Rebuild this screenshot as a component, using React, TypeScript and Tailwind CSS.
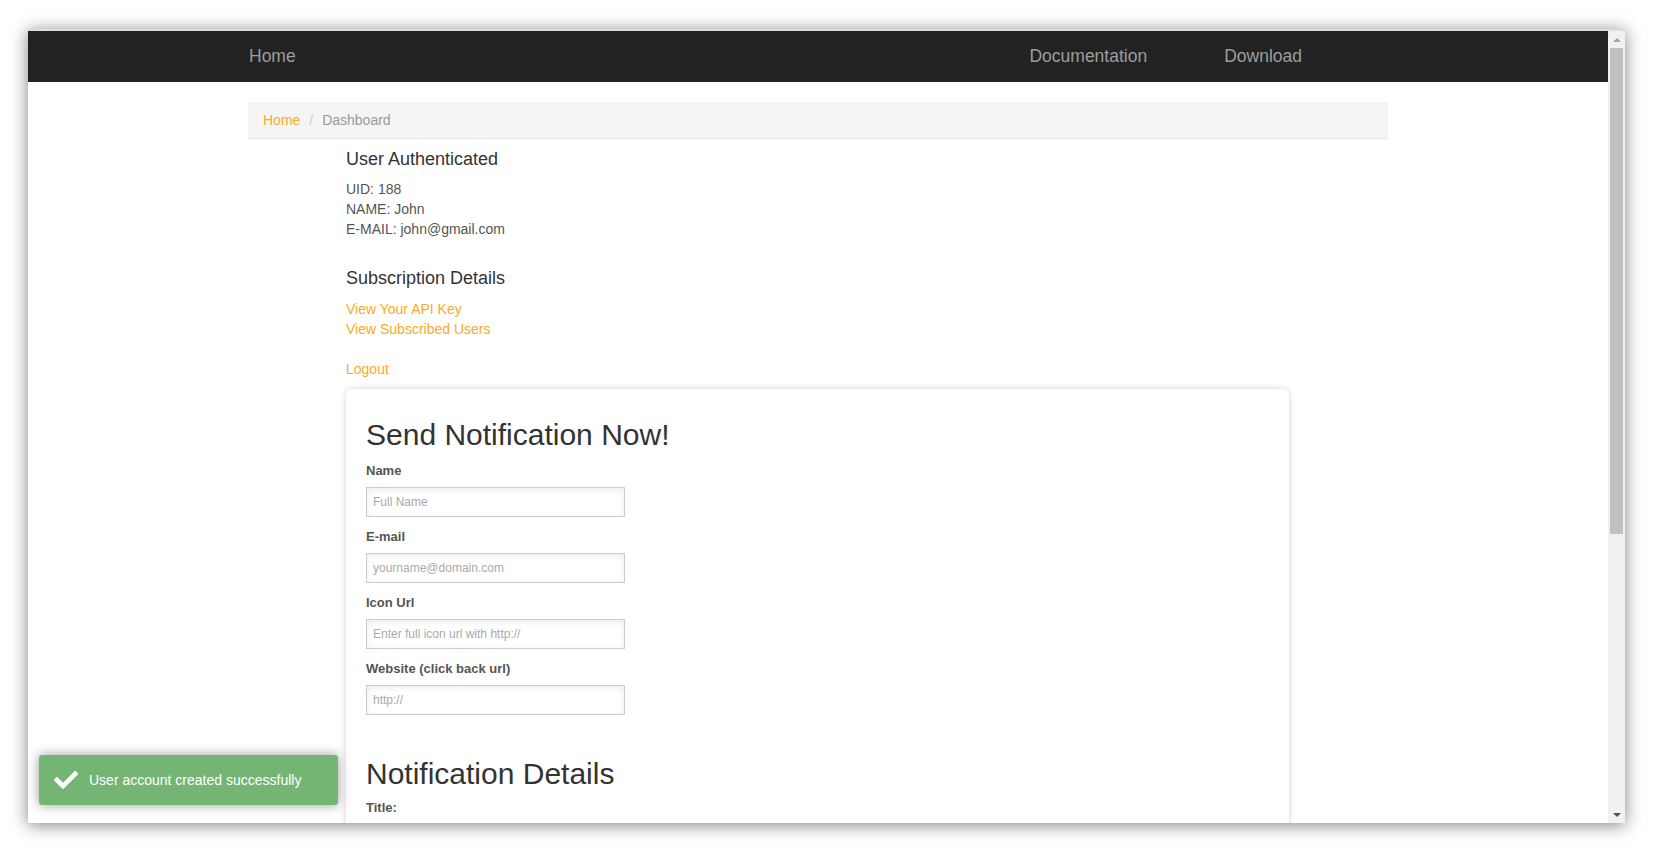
import React from "react";
import { FaCheck } from "react-icons/fa";

const fields = [
  { label: "Name", placeholder: "Full Name" },
  { label: "E-mail", placeholder: "yourname@domain.com" },
  { label: "Icon Url", placeholder: "Enter full icon url with http://" },
  { label: "Website (click back url)", placeholder: "http://" },
];

const Scrollbar: React.FC = () => (
  <div className="flex h-full w-[17px] flex-col bg-[#f1f1f1]">
    <div className="flex h-[17px] items-center justify-center">
      <div className="h-0 w-0 border-x-[4px] border-b-[4px] border-x-transparent border-b-[#a3a3a3]" />
    </div>
    <div className="mx-[2px] h-[486px] bg-[#c1c1c1]" />
    <div className="flex-1" />
    <div className="flex h-[17px] items-center justify-center">
      <div className="h-0 w-0 border-x-[4px] border-t-[4px] border-x-transparent border-t-[#505050]" />
    </div>
  </div>
);

const Toast: React.FC = () => (
  <div className="absolute bottom-[18px] left-[11px] flex h-[50px] w-[299px] items-center rounded-[3px] bg-[#74b574] shadow-[0_0_12px_#999]">
    <FaCheck className="ml-[15px] text-[24px] text-white" />
    <span className="ml-[11px] text-[14px] leading-[20px] text-white">
      User account created successfully
    </span>
  </div>
);

export default function App() {
  return (
    <div className="h-[851px] w-[1653px] overflow-hidden bg-white pl-[28px] pt-[29px] font-['Liberation_Sans',Arial,sans-serif]">
      <div className="flex h-[794px] w-[1597px] border-t-2 border-[#dcdcdc] bg-white shadow-[0_2px_16px_rgba(0,0,0,0.5)]">
        <div className="relative flex-1 overflow-hidden">
          {/* navbar */}
          <div className="h-[51px] bg-[#222]">
            <div className="mx-auto flex h-full w-[1170px] items-center px-[15px] text-[17.5px] text-[#9d9d9d]">
              <a className="ml-px">Home</a>
              <div className="ml-auto mr-[86px] flex gap-[77px]">
                <a>Documentation</a>
                <a>Download</a>
              </div>
            </div>
          </div>

          <div className="mx-auto w-[1170px] px-[15px]">
            {/* breadcrumb */}
            <div className="mt-[20px] h-[37px] border-b border-[#e8e8e8] bg-[#f5f5f5] px-[15px] py-[8px] text-[14px] leading-[20px]">
              <a className="text-[#faaa26]">Home</a>
              <span className="ml-[4px] px-[5px] text-[#ccc]">/{"\u00a0"}</span>
              <span className="text-[#999]">Dashboard</span>
            </div>

            <div className="ml-[98px] text-[14px] leading-[20px] text-[#555]">
              <h4 className="mt-[10px] text-[18px] leading-[20px] text-[#333]">User Authenticated</h4>
              <div className="mt-[10px]">
                <div>UID: 188</div>
                <div>NAME: John</div>
                <div>E-MAIL: john@gmail.com</div>
              </div>

              <h4 className="mt-[29px] text-[18px] leading-[20px] text-[#333]">Subscription Details</h4>
              <div className="mt-[11px] flex flex-col items-start text-[#faaa26]">
                <a>View Your API Key</a>
                <a>View Subscribed Users</a>
              </div>
              <a className="mt-[20px] block text-[#faaa26]">Logout</a>

              {/* notification card */}
              <div className="mt-[10px] h-[500px] w-[943px] rounded-[6px] bg-white px-[20px] pt-[29px] shadow-[0_0_6px_rgba(0,0,0,0.18)]">
                <h2 className="text-[30px] leading-[33px] text-[#333]">Send Notification Now!</h2>
                <div className="mt-[10px]">
                  {fields.map((f) => (
                    <div key={f.label} className="mb-[10px]">
                      <label className="block text-[13px] font-bold leading-[20px] text-[#555]">{f.label}</label>
                      <input
                        placeholder={f.placeholder}
                        className="mt-[6px] block h-[30px] w-[259px] border border-[#ccc] bg-white px-[6px] text-[12px] text-[#555] shadow-[inset_0_2px_6px_rgba(0,0,0,0.08)] outline-none placeholder:text-[#aaa]"
                      />
                    </div>
                  ))}
                </div>
                <h2 className="mt-[42px] text-[30px] leading-[33px] text-[#333]">Notification Details</h2>
                <label className="mt-[8px] block text-[13px] font-bold leading-[20px] text-[#555]">Title:</label>
              </div>
            </div>
          </div>

          <Toast />
        </div>
        <Scrollbar />
      </div>
    </div>
  );
}
